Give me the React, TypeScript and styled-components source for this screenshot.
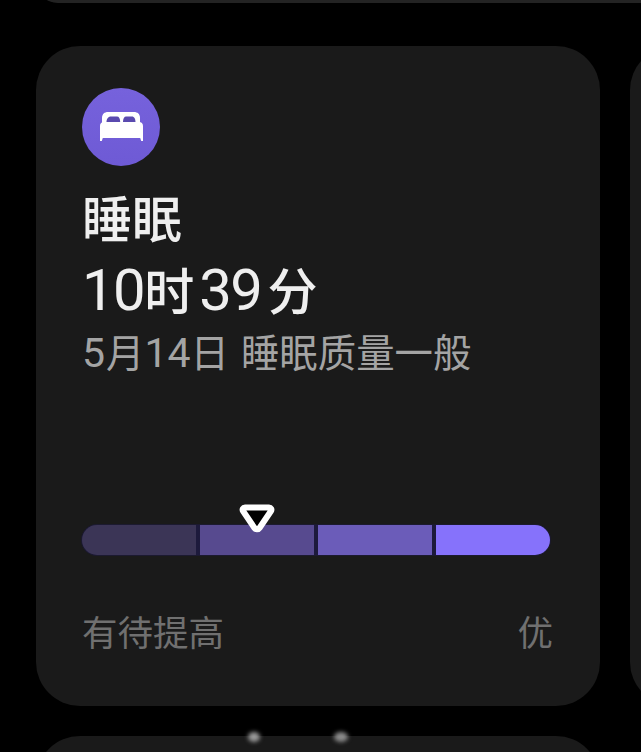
import React from 'react';
import styled, { createGlobalStyle } from 'styled-components';

const GlobalStyle = createGlobalStyle`
  html, body {
    margin: 0;
    padding: 0;
    background: #000;
  }
  body {
    font-family: Roboto, "Noto Sans CJK SC", sans-serif;
  }
`;

const Page = styled.div`
  width: 641px;
  height: 752px;
  background: #000;
  overflow: hidden;
  display: flex;
  flex-direction: column;
  gap: 43px;
`;

const TopCard = styled.div`
  height: 44px;
  margin: -41px -60px 0 36px;
  flex-shrink: 0;
  background: #232323;
  border-radius: 44px;
`;

const Row = styled.div`
  display: flex;
  gap: 30px;
  padding-left: 36px;
  flex-shrink: 0;
`;

const SleepCard = styled.section`
  width: 564px;
  height: 660px;
  box-sizing: border-box;
  flex-shrink: 0;
  padding: 42px 50px 0 46px;
  background: #1a1a1a;
  border-radius: 44px;
  display: flex;
  flex-direction: column;
`;

const SideCard = styled.div`
  width: 100px;
  flex-shrink: 0;
  background: #1a1a1a;
  border-radius: 44px;
`;

const IconCircle = styled.div`
  width: 78px;
  height: 78px;
  border-radius: 50%;
  background: linear-gradient(180deg, #7662dc 0%, #6e5ad5 100%);
  display: flex;
  align-items: center;
  justify-content: center;
`;

const Title = styled.h2`
  margin: 20px 0 0;
  font-size: 50px;
  line-height: 60px;
  font-weight: 500;
  color: #efefef;
  font-family: "Noto Sans CJK SC", sans-serif;
`;

const Duration = styled.div`
  margin-top: 12px;
  height: 60px;
  font-size: 58px;
  line-height: 60px;
  letter-spacing: -1.500px;
  color: #efefef;
  display: flex;
  align-items: baseline;
`;

const Unit = styled.span`
  font-family: "Noto Sans CJK SC", sans-serif;
  font-size: 50px;
  font-weight: 500;
  letter-spacing: 0;
  margin: 0 5px 0 0;
`;

const LastUnit = styled(Unit)`
  margin: 0 0 0 6px;
`;

const Subtitle = styled.div`
  margin-top: 9px;
  font-size: 41px;
  line-height: 46px;
  color: #a4a4a4;
  display: flex;
  align-items: baseline;
`;

const DateText = styled.span`
  margin-right: 12px;
  display: flex;
  align-items: baseline;
`;

const QualityText = styled.span`
  font-family: "Noto Sans CJK SC", sans-serif;
  font-size: 38.400px;
`;

const MonthText = styled(QualityText)`
  margin-left: 1px;
`;

const BarWrap = styled.div`
  position: relative;
  margin-top: 149px;
  height: 30px;
`;

const Bar = styled.div`
  height: 30px;
  display: grid;
  grid-template-columns: repeat(4, 1fr);
  gap: 4px;
  background: #1d1a3c;
  border-radius: 15px;
  box-shadow: 0 0 0 1px #1c1a30;
  overflow: hidden;
`;

const Segment = styled.div<{ $color: string }>`
  background: ${(p) => p.$color};
`;

const Marker = styled.svg`
  position: absolute;
  left: 156px;
  top: -22px;
`;

const Labels = styled.div`
  margin: 52px -3px 0 0;
  display: flex;
  justify-content: space-between;
  font-family: "Noto Sans CJK SC", sans-serif;
  font-size: 35.500px;
  line-height: 48px;
  color: #707070;
`;

const BottomCard = styled.div`
  position: relative;
  width: 564px;
  height: 100px;
  margin-left: 36px;
  margin-top: -13px;
  flex-shrink: 0;
  background: #1a1a1a;
  border-radius: 44px;
`;

const Glare = styled.span<{ $left: number; $width: number; $bright: string }>`
  position: absolute;
  top: -4px;
  left: ${(p) => p.$left}px;
  width: ${(p) => p.$width}px;
  height: 10px;
  border-radius: 50%;
  background: ${(p) => p.$bright};
  filter: blur(2px);
`;

const segments = ['#3b3556', '#574a8f', '#6b5cb9', '#8672fb'];

function BedIcon() {
  return (
    <svg width="46" height="34" viewBox="0 0 46 34">
      <path d="M4 13V8c0-4 2.500-6 6-6h26c3.500 0 6 2 6 6v5z" fill="#fff" />
      <path d="M8.500 12c0-3 1.500-5.500 4.500-5.500h6c2 0 3.200 2 3.200 5.500zM25 12c0-3.500 1.200-5.500 3.200-5.500h5.500c2.800 0 3.800 2.500 3.800 5.500z" fill="#5a4aaf" />
      <path
        d="M2 16c0-2.500 1.500-4 4-4h35c2.500 0 4 1.500 4 4v15h-1.800l-1-3H4.800l-1 3H2z"
        fill="#fff"
      />
    </svg>
  );
}

export default function App() {
  return (
    <>
      <GlobalStyle />
      <Page>
        <TopCard />
        <Row>
          <SleepCard>
            <IconCircle>
              <BedIcon />
            </IconCircle>
            <Title>睡眠</Title>
            <Duration>
              10<Unit>时</Unit>39<LastUnit>分</LastUnit>
            </Duration>
            <Subtitle>
              <DateText>
                5<MonthText>月</MonthText>14<QualityText>日</QualityText>
              </DateText>
              <QualityText>睡眠质量一般</QualityText>
            </Subtitle>
            <BarWrap>
              <Bar>
                {segments.map((color) => (
                  <Segment key={color} $color={color} />
                ))}
              </Bar>
              <Marker width="38" height="32" viewBox="0 0 38 32">
                <path
                  d="M7 4.500h24c2 0 3 2 2 3.500L21.500 25c-1.200 1.800-3.800 1.800-5 0L5 8C4 6.500 5 4.500 7 4.500z"
                  fill="#000"
                  stroke="#fff"
                  strokeWidth="6"
                  strokeLinejoin="round"
                />
              </Marker>
            </BarWrap>
            <Labels>
              <span>有待提高</span>
              <span>优</span>
            </Labels>
          </SleepCard>
          <SideCard />
        </Row>
        <BottomCard>
          <Glare $left={212} $width={12} $bright="#9a9a9a" />
          <Glare $left={298} $width={14} $bright="#8c8c8c" />
        </BottomCard>
      </Page>
    </>
  );
}
